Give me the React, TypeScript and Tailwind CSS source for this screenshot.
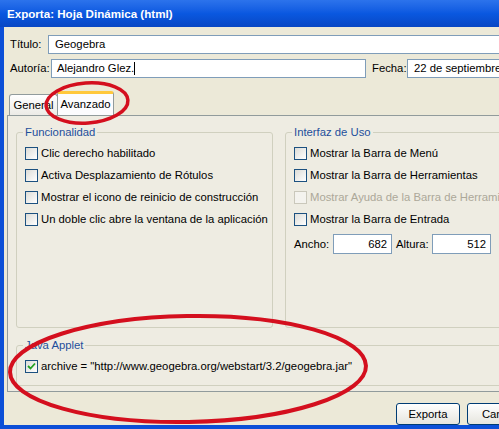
import React from 'react';

const font = { fontFamily: '"Liberation Sans", Arial, sans-serif' };

function Check({ checked = false, disabled = false }: { checked?: boolean; disabled?: boolean }) {
  return (
    <span
      className={`inline-flex items-center justify-center w-[13px] h-[13px] shrink-0 border ${
        disabled ? 'border-[#cac8bb] bg-[#f4f3ee]' : 'border-[#1c5180] bg-gradient-to-br from-[#dcdcd7] to-white'
      }`}
    >
      {checked && (
        <svg width="9" height="9" viewBox="0 0 9 9">
          <path d="M1 4 L3.5 6.5 L8 1.5" fill="none" stroke="#21a121" strokeWidth="1.8" />
        </svg>
      )}
    </span>
  );
}

function Row({ label, checked, disabled }: { label: string; checked?: boolean; disabled?: boolean }) {
  return (
    <div className="flex items-center gap-[3px] h-[22px]">
      <Check checked={checked} disabled={disabled} />
      <span className={`whitespace-nowrap ${disabled ? 'text-[#aca899]' : 'text-black'}`}>{label}</span>
    </div>
  );
}

function Group({ title, className, children }: { title: string; className: string; children: React.ReactNode }) {
  return (
    <div className={`relative border border-[#d0d0bf] rounded-[3px] ${className}`}>
      <span className="absolute -top-[9px] left-[6px] px-[2px] bg-[#eeece2] text-[#1e4f9c] leading-[16px]">{title}</span>
      {children}
    </div>
  );
}

export default function App() {
  return (
    <div className="relative w-[499px] h-[429px] overflow-hidden bg-[#ece9d8] text-[11.3px]" style={font}>
      <div className="w-[560px] h-[429px] flex flex-col">
        <div className="h-[27px] shrink-0 bg-gradient-to-b from-[#2c73ec] via-[#0a58e0] to-[#0847c4] flex items-center pl-[7px] text-white font-bold text-[11.6px]">
          Exporta: Hoja Dinámica (html)
        </div>
        <div className="flex-1 flex border-l-[4px] border-[#0c4fd7]">
          <div className="flex-1 flex flex-col pl-[3px]">
            <div className="flex items-center mt-[8px] h-[19px] pl-[3px]">
              <span className="w-[38px]">Título:</span>
              <div className="flex-1 h-[19px] bg-white border border-[#7f9db9] flex items-center pl-[6px]">Geogebra</div>
            </div>
            <div className="flex items-center mt-[5px] h-[19px] pl-[3px]">
              <span className="w-[41px]">Autoría:</span>
              <div className="w-[315px] h-[19px] bg-white border border-[#7f9db9] flex items-center pl-[5px]">
                Alejandro Glez.<span className="inline-block w-px h-[13px] bg-black" />
              </div>
              <span className="ml-[6px] w-[35px]">Fecha:</span>
              <div className="flex-1 h-[19px] bg-white border border-[#7f9db9] flex items-center pl-[6px]">22 de septiembre de 2009</div>
            </div>
            <div className="flex items-end mt-[13px] h-[24px] pl-[2px]">
              <div className="h-[21px] w-[49px] border border-b-0 border-[#919b9c] rounded-t-[3px] bg-gradient-to-b from-white to-[#ecebe6] flex items-center justify-center">
                General
              </div>
              <div className="h-[24px] w-[57px] border border-b-0 border-[#919b9c] border-t-[3px] border-t-[#ffc83c] rounded-t-[3px] bg-[#fcfcfe] flex items-center justify-center -ml-px">
                Avanzado
              </div>
            </div>
            <div className="h-[277px] border border-[#919b9c] bg-[#eeece2] pl-[8px] pt-[16px] flex flex-col">
              <div className="flex gap-[12px] h-[196px]">
                <Group title="Funcionalidad" className="w-[257px] h-[196px] pl-[8px] pt-[9px]">
                  <Row label="Clic derecho habilitado" />
                  <Row label="Activa Desplazamiento de Rótulos" />
                  <Row label="Mostrar el icono de reinicio de construcción" />
                  <Row label="Un doble clic abre la ventana de la aplicación" />
                </Group>
                <Group title="Interfaz de Uso" className="flex-1 h-[196px] pl-[8px] pt-[9px]">
                  <Row label="Mostrar la Barra de Menú" />
                  <Row label="Mostrar la Barra de Herramientas" />
                  <Row label="Mostrar Ayuda de la Barra de Herramientas" disabled />
                  <Row label="Mostrar la Barra de Entrada" />
                  <div className="flex items-center h-[22px] mt-[3px]">
                    <span className="w-[39px]">Ancho:</span>
                    <div className="w-[59px] h-[20px] bg-white border border-[#7f9db9] flex items-center justify-end pr-[4px]">682</div>
                    <span className="ml-[4px] w-[36px]">Altura:</span>
                    <div className="w-[59px] h-[20px] bg-white border border-[#7f9db9] flex items-center justify-end pr-[4px]">512</div>
                  </div>
                </Group>
              </div>
              <Group title="Java Applet" className="mt-[17px] h-[41px] pl-[8px] pt-[9px]">
                <Row label={'archive = "http://www.geogebra.org/webstart/3.2/geogebra.jar"'} checked />
              </Group>
            </div>
            <div className="flex gap-[7px] mt-[11px] pl-[389px]">
              <button className="w-[64px] h-[22px] border border-[#003c74] rounded-[3px] bg-gradient-to-b from-white to-[#e6e5de]">Exporta</button>
              <button className="w-[75px] h-[22px] border border-[#003c74] rounded-[3px] bg-gradient-to-b from-white to-[#e6e5de]">Cancelar</button>
            </div>
          </div>
        </div>
        <div className="h-[4px] shrink-0 bg-[#0c4fd7]" />
      </div>
      <svg className="absolute inset-0 pointer-events-none" width="499" height="429">
        <ellipse cx="87" cy="103" rx="41" ry="20" fill="none" stroke="#d40f1e" strokeWidth="3.5" transform="rotate(-4 87 103)" />
        <ellipse cx="188" cy="369" rx="178" ry="53" fill="none" stroke="#d40f1e" strokeWidth="4" transform="rotate(-1 188 369)" />
      </svg>
    </div>
  );
}
